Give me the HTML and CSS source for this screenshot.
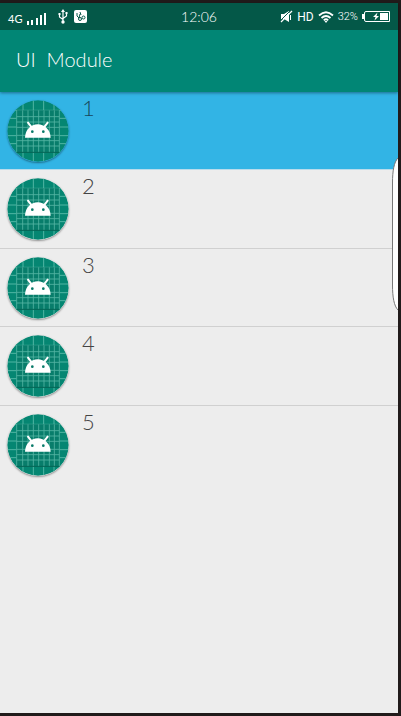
FILE: index.html
```html
<!DOCTYPE html>
<html lang="en">
<head>
<meta charset="utf-8">
<meta name="viewport" content="width=device-width, initial-scale=1">
<title>UI Module</title>
<link rel="stylesheet" href="styles.css">
</head>
<body>
<svg class="defs" aria-hidden="true">
  <symbol id="launcher" viewBox="0 0 186 186">
    <clipPath id="disc"><circle cx="93" cy="93" r="92"/></clipPath>
    <g clip-path="url(#disc)">
      <path fill="#058672" d="M0 0h186v186H0z"/>
      <path fill="none" stroke="#62bfae" stroke-width="2.500" d="M48 0v31M79 0v31M110 0v31M141 0v31M48 157v29M79 157v29M110 157v29M141 157v29M0 55h29M0 81h29M0 107h29M0 131h29M157 55h29M157 81h29M157 107h29M157 131h29M0 31h186"/>
      <path fill="#087d6b" d="M29 31h128v126H29z"/>
      <path fill="none" stroke="#55b5a4" stroke-width="2.500" d="M29 31v126M47 31v126M63 31v126M79 31v126M95 31v126M111 31v126M127 31v126M142 31v126M157 31v126M29 50h128M29 66h128M29 82h128M29 106h128M29 122h128M29 138h128"/>
      <path stroke="#066455" stroke-width="3" d="M29 157h128"/>
    </g>
    <path fill="#fff" d="M54 113C55 89 72 73 92 73s38 16 39 40z"/>
    <path fill="none" stroke="#fff" stroke-width="6" stroke-linecap="round" d="M63 68l11 14M122 68l-11 14"/>
    <circle cx="76" cy="95" r="4" fill="#087a69"/><circle cx="109" cy="95" r="4" fill="#087a69"/>
  </symbol>
</svg>
<div class="screen">
  <header>
    <div class="status">
      <div class="side">
        <span class="net">4G</span>
        <svg class="signal" width="22" height="14" viewBox="0 0 22 14"><path fill="#fff" d="M1 9h2v4H1zM5 8h2v5H5zM10 6h2v7h-2zM14 3h2v10h-2zM18 1h2v12h-2z"/></svg>
        <svg class="usb" width="10" height="15" viewBox="0 0 10 15"><path fill="none" stroke="#fff" stroke-width="1.200" d="M5 2v11M1.500 5v3L5 10.500M8.500 4v3L5 9.500"/><path fill="#fff" d="M5 0l2 3H3zM.5 4h2v2h-2zM7.500 3h2v2h-2z"/><circle cx="5" cy="13" r="1.700" fill="#fff"/></svg>
        <svg width="13" height="13" viewBox="0 0 13 13"><rect width="13" height="13" rx="2" fill="#fff"/><path fill="none" stroke="#075848" d="M3 3v3l2 2 1-4M6 2l1 3"/><circle cx="6" cy="9" r="1.500" fill="none" stroke="#075848"/><circle cx="9.500" cy="7.500" r="1.500" fill="none" stroke="#075848"/></svg>
      </div>
      <time class="clock">12:06</time>
      <div class="side end">
        <svg width="13" height="13" viewBox="0 0 13 13"><path fill="#fff" d="M1 4h3l5-3v11L4 9H1z"/><path stroke="#fff" d="M10.500 5v5"/><path stroke="#075848" d="M0 11L11 0"/><path stroke="#fff" stroke-width="1.200" d="M1 12L12 1"/></svg>
        <span class="hd">HD</span>
        <svg width="16" height="12" viewBox="0 0 16 12"><path fill="none" stroke="#fff" stroke-width="1.800" d="M1 4.500q7-6.500 14 0M3.500 7q4.500-4 9 0M5.800 9.300q2.200-2 4.400 0"/><path fill="#fff" d="M6.500 10h3L8 12z"/></svg>
        <span class="percent">32%</span>
        <svg width="28" height="11" viewBox="0 0 28 11"><path fill="none" stroke="#fff" d="M4 .5h23.500v10H4q-1.500 0-1.500-1.500V2Q2.500.5 4 .5z"/><path fill="#fff" d="M0 3h2v5H0zM18 2h8v7h-8zM15.500 1.500L11 6h2.500l-1 3.500L17 5h-2.500z"/></svg>
      </div>
    </div>
    <div class="appbar"><h1>UI&nbsp; Module</h1></div>
  </header>
  <main>
    <ul>
      <li class="selected"><svg class="icon"><use href="#launcher"/></svg><span>1</span></li>
      <li><svg class="icon"><use href="#launcher"/></svg><span>2</span></li>
      <li><svg class="icon"><use href="#launcher"/></svg><span>3</span></li>
      <li><svg class="icon"><use href="#launcher"/></svg><span>4</span></li>
      <li><svg class="icon"><use href="#launcher"/></svg><span>5</span></li>
    </ul>
  </main>
  <svg class="handle" width="6" height="154" viewBox="0 0 6 154"><path fill="#fff" d="M6 1C2 5 .5 14 .5 26v102c0 12 1.500 21 5.500 25z"/><path fill="none" stroke="#777" d="M6 1C2 5 .5 14 .5 26v102c0 12 1.500 21 5.500 25"/></svg>
</div>
</body>
</html>
```
FILE: styles.css
```css
* {
  box-sizing: border-box;
}

body {
  margin: 0;
  min-height: 100vh;
  display: flex;
  padding: 3px 3px 3px 0;
  background: #211b1b;
  font-family: Lato, "Open Sans", sans-serif;
  font-weight: 300;
}

.defs {
  position: absolute;
  width: 0;
  height: 0;
}

.screen {
  position: relative;
  flex: 1;
  background: #ededed;
}

header {
  position: relative;
  color: #fff;
  box-shadow: 0 1px 3px rgba(0, 0, 0, 0.4);
}

.status {
  display: flex;
  align-items: center;
  height: 27px;
  padding: 0 8px;
  background: #045848;
  font-size: 12px;
  font-weight: 400;
}

.side {
  display: flex;
  flex: 1;
  align-items: center;
  gap: 4px;
}

.end {
  justify-content: flex-end;
}

.net {
  padding-top: 4px;
  font-size: 11px;
}

.signal {
  margin-top: 4px;
}

.usb {
  margin: 0 2px 0 6px;
}

.clock {
  font-size: 14px;
}

.hd {
  font-family: Roboto, sans-serif;
}

.percent {
  font-family: Roboto, sans-serif;
  font-size: 11px;
}

.percent,
.clock {
  font-weight: 300;
}

.appbar {
  display: flex;
  align-items: center;
  height: 62px;
  padding: 0 16px 4px;
  background: #018675;
}

h1 {
  margin: 0;
  font-size: 20px;
  font-weight: 300;
}

ul {
  margin: 0;
  padding: 0;
  list-style: none;
}

li {
  display: flex;
  gap: 13px;
  height: 78px;
  padding: 8px 7px 0;
  border-bottom: 1px solid #d0d0d0;
  color: #444;
  font-size: 22px;
  line-height: 24px;
}

li:nth-child(even) {
  height: 79px;
}

li:last-child {
  border-bottom: 0;
}

.selected {
  border-bottom-color: #b9dcec;
  background: #32b4e5;
  color: #17465c;
}

li span {
  margin-top: -4px;
}

.icon {
  width: 62px;
  height: 62px;
  border-radius: 50%;
  box-shadow: 0 1px 2px rgba(0, 0, 0, 0.4);
}

.handle {
  position: absolute;
  top: 154px;
  right: 0;
}
```
